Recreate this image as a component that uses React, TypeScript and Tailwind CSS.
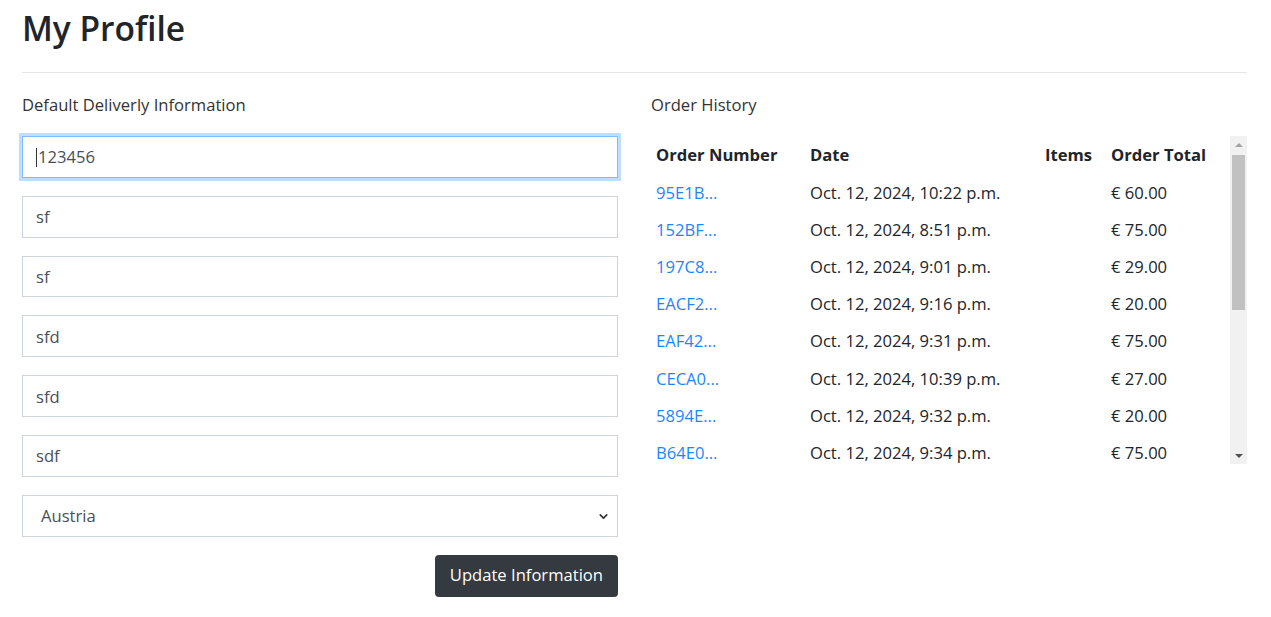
import { ChevronDown } from 'lucide-react';

const orders = [
  { id: '95E1B...', date: 'Oct. 12, 2024, 10:22 p.m.', total: '€ 60.00' },
  { id: '152BF...', date: 'Oct. 12, 2024, 8:51 p.m.', total: '€ 75.00' },
  { id: '197C8...', date: 'Oct. 12, 2024, 9:01 p.m.', total: '€ 29.00' },
  { id: 'EACF2...', date: 'Oct. 12, 2024, 9:16 p.m.', total: '€ 20.00' },
  { id: 'EAF42...', date: 'Oct. 12, 2024, 9:31 p.m.', total: '€ 75.00' },
  { id: 'CECA0...', date: 'Oct. 12, 2024, 10:39 p.m.', total: '€ 27.00' },
  { id: '5894E...', date: 'Oct. 12, 2024, 9:32 p.m.', total: '€ 20.00' },
  { id: 'B64E0...', date: 'Oct. 12, 2024, 9:34 p.m.', total: '€ 75.00' },
];

const fields = ['123456', 'sf', 'sf', 'sfd', 'sfd', 'sdf'];

export default function App() {
  return (
    <div
      className="min-h-[617px] bg-white pr-[24px] pl-[22px] text-[16.6px] text-[#212529]"
      style={{ fontFamily: '"Open Sans", "Noto Sans", sans-serif' }}
    >
      <h1 className="pt-[5px] text-[33.5px] leading-[46px] font-semibold">My Profile</h1>
      <hr className="mt-[21px] border-t border-[#e6e6e6]" />

      <div className="mt-[16px] grid grid-cols-2 gap-x-[33px]">
        {/* Delivery form */}
        <div>
          <p className="mb-[15px] leading-[32px] text-[#333]">Default Deliverly Information</p>
          <div className="flex flex-col gap-[18px]">
            {fields.map((value, i) => (
              <div
                key={i}
                className={
                  i === 0
                    ? 'flex h-[41.8px] items-center border border-[#80bdff] px-[13px] pt-[2px] text-[#495057] shadow-[0_0_0_3px_rgba(0,123,255,0.25)]'
                    : 'flex h-[41.8px] items-center border border-[#ced4da] px-[13px] pt-[2px] text-[#495057]'
                }
              >
                {i === 0 && <span className="mr-[1px] h-[19px] w-px bg-[#333]" />}
                {value}
              </div>
            ))}
            <div className="flex h-[41.8px] items-center justify-between border border-[#ced4da] pt-[2px] pr-[7px] pl-[18px] text-[#495057]">
              <span>Austria</span>
              <ChevronDown className="h-[13px] w-[13px] text-[#333]" strokeWidth={3} />
            </div>
          </div>
          <div className="mt-[18px] flex justify-end">
            <button className="h-[42px] rounded-[4px] bg-[#343a40] px-[15px] text-white">
              Update Information
            </button>
          </div>
        </div>

        {/* Order history */}
        <div>
          <p className="mb-[15px] leading-[32px] text-[#333]">Order History</p>
          <div className="flex h-[328px] overflow-hidden">
            <div className="flex-1 overflow-hidden">
              <table className="w-[562px] table-fixed border-collapse">
                <colgroup>
                  <col className="w-[154px]" />
                  <col className="w-[235px]" />
                  <col className="w-[66px]" />
                  <col className="w-[107px]" />
                </colgroup>
                <thead>
                  <tr className="h-[38.5px] text-left font-bold">
                    <th className="px-[5px]">Order Number</th>
                    <th className="px-[5px]">Date</th>
                    <th className="px-[5px]">Items</th>
                    <th className="px-[5px]">Order Total</th>
                  </tr>
                </thead>
                <tbody>
                  {orders.map((o) => (
                    <tr key={o.id} className="h-[37.2px]">
                      <td className="px-[5px] text-[#1f84ff]">{o.id}</td>
                      <td className="px-[5px]">{o.date}</td>
                      <td className="px-[5px]"></td>
                      <td className="px-[5px]">{o.total}</td>
                    </tr>
                  ))}
                </tbody>
              </table>
            </div>
            {/* scrollbar */}
            <div className="flex w-[17px] flex-col bg-[#f1f1f1]">
              <div className="flex h-[17px] items-center justify-center">
                <span className="h-0 w-0 border-x-[4px] border-b-[4px] border-x-transparent border-b-[#a3a3a3]" />
              </div>
              <div className="mx-[2px] mt-[2px] h-[155px] bg-[#c1c1c1]" />
              <div className="flex-1" />
              <div className="flex h-[17px] items-center justify-center">
                <span className="h-0 w-0 border-x-[4px] border-t-[4px] border-x-transparent border-t-[#505050]" />
              </div>
            </div>
          </div>
        </div>
      </div>
    </div>
  );
}
